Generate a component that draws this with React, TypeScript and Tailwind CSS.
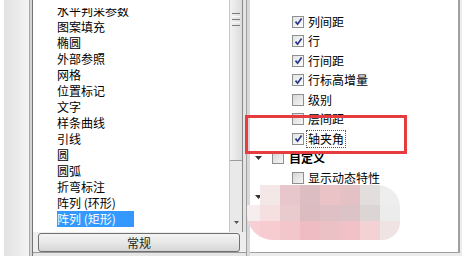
import React from 'react';

const FONT = '"Noto Sans CJK SC", "Noto Sans", sans-serif';

const listItems = [
  '图案填充', '椭圆', '外部参照', '网格', '位置标记', '文字', '样条曲线',
  '引线', '圆', '圆弧', '折弯标注', '阵列 (环形)',
];

const props = [
  { label: '列间距', on: true },
  { label: '行', on: true },
  { label: '行间距', on: true },
  { label: '行标高增量', on: true },
  { label: '级别', on: false },
  { label: '层间距', on: false },
  { label: '轴夹角', on: true, focus: true },
];

// mosaic colours of the blurred area, 3 rows x 8 columns
const mosaic = [
  ['transparent', '#f4e7e8', '#e7c7cb', '#dcbdc1', '#eac3c7', '#e4c1c5', '#e3dede', '#efeeee'],
  ['#f6eeee', '#f5dfe1', '#e9cbce', '#dcbcc1', '#dfc0c5', '#dcc3c7', '#dcd5d6', '#ececec'],
  ['#f7cfd4', '#f6ccd1', '#f3c6cb', '#efbcc3', '#ecc1c6', '#f0c2c7', '#f3d1d5', '#efe3e4'],
];

const Check = ({ on }: { on: boolean }) => (
  <span
    className={`w-[12px] h-[12px] border border-[#8e8f8f] flex items-center justify-center shrink-0 ${
      on ? 'bg-gradient-to-br from-[#e4e4e4] to-[#fdfdfd]' : 'bg-gradient-to-br from-[#d6d6d6] to-[#f6f6f6]'
    }`}
  >
    {on && (
      <svg width="9" height="9" viewBox="0 0 9 9">
        <path d="M1.5 4.6 L3.6 7.2 L7.6 1.4" stroke="#26378a" strokeWidth="1.7" fill="none" />
      </svg>
    )}
  </span>
);

const Arrow = () => (
  <svg width="7" height="4" viewBox="0 0 7 4" className="shrink-0">
    <path d="M0 0 H7 L3.5 4 Z" fill="#333" />
  </svg>
);

export default function App() {
  return (
    <div
      className="relative flex w-[462px] h-[256px] bg-white overflow-hidden text-[12px] text-black"
      style={{ fontFamily: FONT }}
    >
      {/* left window edge */}
      <div className="w-[4px] bg-white" />
      <div className="w-[25px] bg-gradient-to-r from-[#e2e2e2] to-[#f3f3f3]" />
      <div className="w-[4px] bg-[#d4d4d4] border-l border-r border-l-[#a8a8a8] border-r-[#747474]" />

      {/* object type list */}
      <div className="w-[213px] flex flex-col">
        <div className="flex h-[232px]">
          <div className="w-[196px] bg-white pt-[8px] pl-[24px]">
            <div className="h-[10.5px] overflow-hidden flex flex-col justify-end">
              <div className="h-[16px] leading-[16px] shrink-0">水平判采参数</div>
            </div>
            {listItems.map((it) => (
              <div key={it} className="h-[16px] leading-[16px] whitespace-pre">
                {it}
              </div>
            ))}
            <div className="h-[16px] leading-[16px]">
              <span className="inline-block w-[77px] h-[16px] bg-[#3399ff] text-white whitespace-pre">阵列 (矩形)</span>
            </div>
          </div>

          {/* scrollbar */}
          <div className="w-[17px] flex bg-[#e9e9e9]">
            <div className="w-[1px] bg-[#c6c6c6]" />
            <div className="w-[12px] flex flex-col">
              <div className="h-[161px] bg-gradient-to-r from-[#f2f2f2] to-[#dcdcdc] border-b border-[#9c9c9c] pt-[13px] px-[2px] flex flex-col gap-[2px]">
                <div className="h-[1px] bg-[#7c7c7c]" />
                <div className="h-[1px] bg-[#f8f8f8]" />
                <div className="h-[1px] bg-[#7c7c7c]" />
                <div className="h-[1px] bg-[#f8f8f8]" />
                <div className="h-[1px] bg-[#7c7c7c]" />
              </div>
              <div className="flex-1 flex flex-col justify-end items-center pb-[8px]">
                <svg width="5" height="3" viewBox="0 0 5 3">
                  <path d="M0 0 H5 L2.5 3 Z" fill="#555" />
                </svg>
              </div>
            </div>
            <div className="w-[1px] bg-[#8a8a8a]" />
            <div className="w-[3px] bg-[#e4e4e4]" />
          </div>
        </div>

        <div className="h-[20px] bg-[#eeeeee] pl-[5px] pr-[6px] pt-[1px]">
          <button className="w-full h-[19px] rounded-[3px] border border-[#707070] bg-gradient-to-b from-[#f4f4f4] via-[#e8e8e8] to-[#d6d6d6] text-[12px] leading-[16px] text-[#1f2a14] flex items-center justify-center">
            常规
          </button>
        </div>
        <div className="flex-1 bg-[#e6e6e6] border-t border-[#9a9a9a]" />
      </div>

      {/* splitter */}
      <div className="w-[4px] flex">
        <div className="w-[1px] bg-[#a0a0a0]" />
        <div className="w-[3px] bg-[#d8d8d8]" />
      </div>

      {/* property tree */}
      <div className="w-[212px] bg-[#ececec] pr-[2px] pb-[3px]">
        <div className="h-[253px] bg-white border-r-2 border-b border-[#a0a0a0] pt-[12px]">
          {props.map((p) => (
            <div key={p.label} className="h-[19.5px] flex items-center pl-[42px] gap-[4px]">
              <Check on={p.on} />
              <span
                className={`leading-[16px] ${
                  p.focus ? 'border border-dotted border-[#555] px-[1px] -ml-[2px]' : ''
                }`}
              >
                {p.label}
              </span>
            </div>
          ))}
          <div className="h-[19.5px] flex items-center pl-[5px]">
            <Arrow />
            <span className="ml-[10px]">
              <Check on={false} />
            </span>
            <span className="ml-[5px] leading-[16px] font-bold">自定义</span>
          </div>
          <div className="h-[19.5px] flex items-center pl-[42px] gap-[4px]">
            <Check on={false} />
            <span className="leading-[16px]">显示动态特性</span>
          </div>
          <div className="h-[19.5px] flex items-center pl-[5px]">
            <Arrow />
          </div>
        </div>
      </div>

      {/* red highlight frame */}
      <div className="absolute left-[245px] top-[115px] w-[162px] h-[39px] border-[3px] border-[#e63b3f]" />

      {/* blurred mosaic */}
      <div className="absolute left-[247px] top-[185px] w-[153px] h-[55px] rounded-tl-[10px] rounded-tr-[22px] rounded-br-[18px] rounded-bl-[26px] overflow-hidden grid grid-cols-[13px_repeat(7,20px)] grid-rows-[20px_16px_19px]">
        {mosaic.flat().map((c, i) => (
          <div key={i} style={{ background: c }} />
        ))}
      </div>
    </div>
  );
}
